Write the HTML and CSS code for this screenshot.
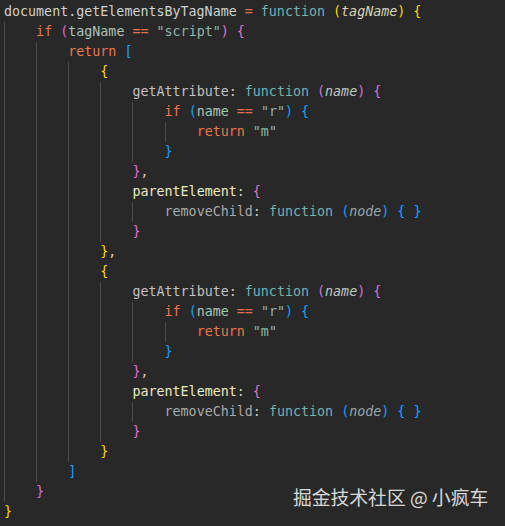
FILE: index.html
```html
<!DOCTYPE html>
<html>
<head>
<meta charset="utf-8">
<link rel="stylesheet" href="styles.css">
</head>
<body>
<div class="editor">
<div class="code">
<div class="ln"><span class="id">document</span><span class="pn">.</span><span class="id">getElementsByTagName</span> <span class="op">=</span> <span class="fn">function</span> <span class="b1">(</span><span class="pa1">tagName</span><span class="b1">)</span> <span class="b1">{</span></div>
<div class="ln"><span class="ig">    </span><span class="kw">if</span> <span class="b2">(</span><span class="v">tagName</span> <span class="op">==</span> <span class="st">"script"</span><span class="b2">)</span> <span class="b2">{</span></div>
<div class="ln"><span class="ig">    </span><span class="ig">    </span><span class="kw">return</span> <span class="b3">[</span></div>
<div class="ln"><span class="ig">    </span><span class="ig">    </span><span class="ig">    </span><span class="b1">{</span></div>
<div class="ln"><span class="ig">    </span><span class="ig">    </span><span class="ig">    </span><span class="ig">    </span><span class="pr">getAttribute</span><span class="pn">:</span> <span class="fn">function</span> <span class="b2">(</span><span class="pa">name</span><span class="b2">)</span> <span class="b2">{</span></div>
<div class="ln"><span class="ig">    </span><span class="ig">    </span><span class="ig">    </span><span class="ig">    </span><span class="ig">    </span><span class="kw">if</span> <span class="b3">(</span><span class="v">name</span> <span class="op">==</span> <span class="st">"r"</span><span class="b3">)</span> <span class="b3">{</span></div>
<div class="ln"><span class="ig">    </span><span class="ig">    </span><span class="ig">    </span><span class="ig">    </span><span class="ig">    </span><span class="ig">    </span><span class="kw">return</span> <span class="st">"m"</span></div>
<div class="ln"><span class="ig">    </span><span class="ig">    </span><span class="ig">    </span><span class="ig">    </span><span class="ig">    </span><span class="b3">}</span></div>
<div class="ln"><span class="ig">    </span><span class="ig">    </span><span class="ig">    </span><span class="ig">    </span><span class="b2">}</span><span class="pn">,</span></div>
<div class="ln"><span class="ig">    </span><span class="ig">    </span><span class="ig">    </span><span class="ig">    </span><span class="pe">parentElement</span><span class="pn">:</span> <span class="b2">{</span></div>
<div class="ln"><span class="ig">    </span><span class="ig">    </span><span class="ig">    </span><span class="ig">    </span><span class="ig">    </span><span class="rc">removeChild</span><span class="pn">:</span> <span class="fn">function</span> <span class="b3">(</span><span class="pa2">node</span><span class="b3">)</span> <span class="b3">{</span> <span class="b3">}</span></div>
<div class="ln"><span class="ig">    </span><span class="ig">    </span><span class="ig">    </span><span class="ig">    </span><span class="b2">}</span></div>
<div class="ln"><span class="ig">    </span><span class="ig">    </span><span class="ig">    </span><span class="b1">}</span><span class="pn">,</span></div>
<div class="ln"><span class="ig">    </span><span class="ig">    </span><span class="ig">    </span><span class="b1">{</span></div>
<div class="ln"><span class="ig">    </span><span class="ig">    </span><span class="ig">    </span><span class="ig">    </span><span class="pr">getAttribute</span><span class="pn">:</span> <span class="fn">function</span> <span class="b2">(</span><span class="pa">name</span><span class="b2">)</span> <span class="b2">{</span></div>
<div class="ln"><span class="ig">    </span><span class="ig">    </span><span class="ig">    </span><span class="ig">    </span><span class="ig">    </span><span class="kw">if</span> <span class="b3">(</span><span class="v">name</span> <span class="op">==</span> <span class="st">"r"</span><span class="b3">)</span> <span class="b3">{</span></div>
<div class="ln"><span class="ig">    </span><span class="ig">    </span><span class="ig">    </span><span class="ig">    </span><span class="ig">    </span><span class="ig">    </span><span class="kw">return</span> <span class="st">"m"</span></div>
<div class="ln"><span class="ig">    </span><span class="ig">    </span><span class="ig">    </span><span class="ig">    </span><span class="ig">    </span><span class="b3">}</span></div>
<div class="ln"><span class="ig">    </span><span class="ig">    </span><span class="ig">    </span><span class="ig">    </span><span class="b2">}</span><span class="pn">,</span></div>
<div class="ln"><span class="ig">    </span><span class="ig">    </span><span class="ig">    </span><span class="ig">    </span><span class="pe">parentElement</span><span class="pn">:</span> <span class="b2">{</span></div>
<div class="ln"><span class="ig">    </span><span class="ig">    </span><span class="ig">    </span><span class="ig">    </span><span class="ig">    </span><span class="rc">removeChild</span><span class="pn">:</span> <span class="fn">function</span> <span class="b3">(</span><span class="pa2">node</span><span class="b3">)</span> <span class="b3">{</span> <span class="b3">}</span></div>
<div class="ln"><span class="ig">    </span><span class="ig">    </span><span class="ig">    </span><span class="ig">    </span><span class="b2">}</span></div>
<div class="ln"><span class="ig">    </span><span class="ig">    </span><span class="ig">    </span><span class="b1">}</span></div>
<div class="ln"><span class="ig">    </span><span class="ig">    </span><span class="b3">]</span></div>
<div class="ln"><span class="ig">    </span><span class="b2">}</span></div>
<div class="ln"><span class="b1">}</span></div>
</div>
<div class="watermark">掘金技术社区 @ 小疯车</div>
</div>
</body>
</html>
```
FILE: styles.css
```css
html, body {
  margin: 0;
  padding: 0;
  background: #282828;
}
.editor {
  position: relative;
  width: 505px;
  height: 526px;
  background: #282828;
  overflow: hidden;
}
.code {
  padding: 2px 0 0 4px;
  font-family: "DejaVu Sans Mono", "Liberation Mono", monospace;
  font-size: 13.33px;
  line-height: 20px;
  color: #cccccc;
}
.ln {
  white-space: pre;
  height: 20px;
}
.ig {
  display: inline-block;
  height: 20px;
  vertical-align: top;
  box-shadow: inset 1px 0 0 #4a4a4a;
}
.id { color: #d0d0d0; }
.pn { color: #d0d0d0; }
.op { color: #e5704c; }
.kw { color: #e27a4c; }
.fn { color: #74b3ad; }
.b1 { color: #ffd700; }
.b2 { color: #da70d6; }
.b3 { color: #179fff; }
.pa1 { color: #d8d2ae; font-style: italic; }
.pa { color: #c4c4c4; font-style: italic; }
.pa2 { color: #9aa4ae; font-style: italic; }
.v { color: #a9c2bc; }
.st { color: #8fb5ab; }
.pr { color: #c2c2c2; }
.pe { color: #ecebc4; }
.rc { color: #a8a8a8; }
.watermark {
  position: absolute;
  left: 293px;
  top: 484px;
  font-family: "Noto Sans CJK SC", "Noto Sans", sans-serif;
  font-size: 18.8px;
  line-height: 26px;
  color: #e6e6e6;
  opacity: 0.92;
}
```
